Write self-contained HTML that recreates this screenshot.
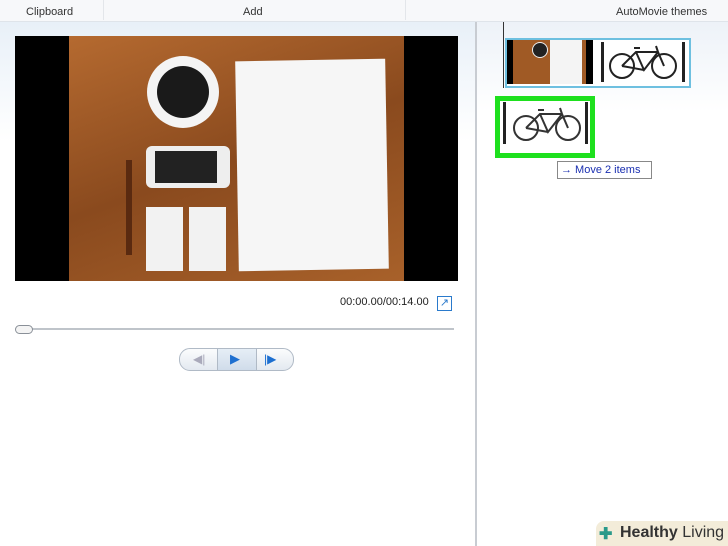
<!DOCTYPE html><html><head><style>
body{margin:0;width:728px;height:546px;position:relative;overflow:hidden;font-family:"Liberation Sans",sans-serif;background:#fff}
.a{position:absolute}
</style></head><body>
<div class="a" style="left:0;top:0;width:728px;height:21px;background:#f7f8fa;border-bottom:1px solid #dfe4ea;font-size:11px;color:#333"></div>
<div class="a" style="left:26px;top:6px;font-size:11px;color:#333">Clipboard</div>
<div class="a" style="left:243px;top:6px;font-size:11px;color:#333">Add</div>
<div class="a" style="left:616px;top:6px;font-size:11px;color:#333">AutoMovie themes</div>
<div class="a" style="left:103px;top:0;width:1px;height:20px;background:#e3e6ea"></div>
<div class="a" style="left:405px;top:0;width:1px;height:20px;background:#e3e6ea"></div>
<div class="a" style="left:0;top:22px;width:475px;height:524px;background:linear-gradient(#e8f0f8,#fff 120px)"></div>
<div class="a" style="left:475px;top:22px;width:2px;height:524px;background:#c8ccd2"></div>
<div class="a" style="left:477px;top:22px;width:251px;height:524px;background:linear-gradient(#edf2f8,#fff 90px)"></div>
<div class="a" style="left:503px;top:22px;width:1px;height:66px;background:#333"></div>
<div class="a" style="left:15px;top:36px;width:443px;height:245px;background:#000"></div>
<div class="a" style="left:69px;top:36px;width:335px;height:245px;background:linear-gradient(160deg,#b56a30,#8a4a1e 50%,#a8612a)"></div>
<div class="a" style="left:147px;top:56px;width:72px;height:72px;border-radius:50%;background:#f4f4f4"></div>
<div class="a" style="left:157px;top:66px;width:52px;height:52px;border-radius:50%;background:#1a1a1a"></div>
<div class="a" style="left:237px;top:60px;width:150px;height:210px;background:#f6f6f6;transform:rotate(-1deg)"></div>
<div class="a" style="left:146px;top:146px;width:84px;height:42px;border-radius:6px;background:#eee"></div>
<div class="a" style="left:155px;top:151px;width:62px;height:32px;background:#222"></div>
<div class="a" style="left:146px;top:207px;width:37px;height:64px;background:#f2f2f2"></div>
<div class="a" style="left:189px;top:207px;width:37px;height:64px;background:#f2f2f2"></div>
<div class="a" style="left:126px;top:160px;width:6px;height:95px;background:#5a2a10"></div>
<div class="a" style="left:340px;top:296px;font-size:11px;color:#222">00:00.00/00:14.00</div>
<div class="a" style="left:437px;top:296px;width:13px;height:13px;border:1px solid #2a7acc;color:#2a7acc;font-size:11px;line-height:12px;text-align:center">↗</div>
<div class="a" style="left:18px;top:328px;width:436px;height:2px;background:#bfc4ca"></div>
<div class="a" style="left:15px;top:325px;width:16px;height:7px;border:1px solid #8a9098;border-radius:5px;background:#f4f4f4"></div>
<div class="a" style="left:179px;top:348px;width:113px;height:21px;border:1px solid #b0bac6;border-radius:11px;background:linear-gradient(#fbfcfd,#e3e9f0)"></div>
<div class="a" style="left:217px;top:349px;width:38px;height:21px;background:linear-gradient(#e6eef6,#d0dcea);border-left:1px solid #b0bac6;border-right:1px solid #b0bac6"></div>
<div class="a" style="left:193px;top:352px;font-size:12px;color:#aab">◀|</div>
<div class="a" style="left:230px;top:351px;font-size:13px;color:#1d6fd0">▶</div>
<div class="a" style="left:264px;top:352px;font-size:12px;color:#1d6fd0">|▶</div>
<div class="a" style="left:505px;top:38px;width:182px;height:46px;border:2px solid #6ec0e0;background:#fff"></div>
<div class="a" style="left:507px;top:40px;width:86px;height:44px;background:#a05a25"></div>
<div class="a" style="left:507px;top:40px;width:6px;height:44px;background:#000"></div>
<div class="a" style="left:550px;top:40px;width:32px;height:44px;background:#f4f4f4"></div>
<div class="a" style="left:532px;top:42px;width:14px;height:14px;border-radius:50%;background:#222;border:1px solid #eee"></div>
<div class="a" style="left:586px;top:40px;width:7px;height:44px;background:#000"></div>
<div class="a" style="left:601px;top:42px;width:3px;height:40px;background:#222"></div>
<div class="a" style="left:682px;top:42px;width:3px;height:40px;background:#222"></div>
<svg class="a" style="left:606px;top:44px" width="74" height="38"><g fill="none" stroke="#222" stroke-width="2"><circle cx="16" cy="22" r="12"/><circle cx="58" cy="22" r="12"/><path d="M16 22 L30 8 L52 8 L58 22 M30 8 L38 26 L52 8 M38 26 L16 22 M28 4 h6 M50 2 l2 6"/></g></svg>
<div class="a" style="left:495px;top:96px;width:90px;height:52px;border:5px solid #1ee01e;background:#fff"></div>
<div class="a" style="left:503px;top:102px;width:3px;height:42px;background:#222"></div>
<div class="a" style="left:585px;top:102px;width:3px;height:42px;background:#222"></div>
<svg class="a" style="left:510px;top:106px" width="74" height="38"><g fill="none" stroke="#333" stroke-width="2"><circle cx="16" cy="22" r="12"/><circle cx="58" cy="22" r="12"/><path d="M16 22 L30 8 L52 8 L58 22 M30 8 L38 26 L52 8 M38 26 L16 22 M28 4 h6 M50 2 l2 6"/></g></svg>
<div class="a" style="left:557px;top:161px;width:93px;height:16px;border:1px solid #888;background:#fff;font-size:11px;color:#1a2fb0;line-height:16px;padding-left:3px;box-sizing:border-box;width:95px;height:18px">→ Move 2 items</div>
<div class="a" style="left:596px;top:521px;width:132px;height:25px;background:#f3ecd9;border-radius:8px 0 0 0"></div>
<div class="a" style="left:599px;top:524px;font-size:16px;font-weight:bold;color:#2a9a8a">✚</div>
<div class="a" style="left:620px;top:524px;font-size:16px;color:#333"><b>Healthy</b> Living</div>
</body></html>
